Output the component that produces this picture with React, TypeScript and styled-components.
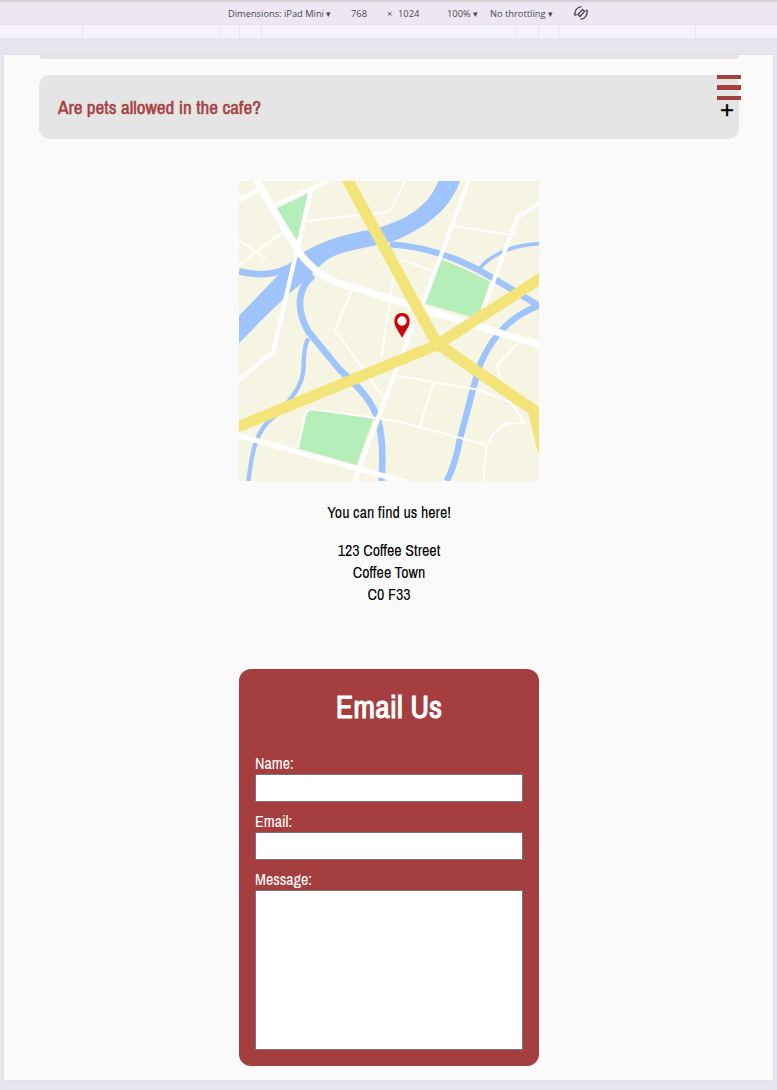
import React from "react";
import styled, { createGlobalStyle } from "styled-components";

const Global = createGlobalStyle`
  html, body { margin: 0; padding: 0; background: #e9e5f0; }
  body { width: 777px; height: 1090px; overflow: hidden; }
`;
const Page = styled.div`
  width: 777px; height: 1090px; display: flex; flex-direction: column; background: #e9e5f0;
  border-top: 2px solid #d4d2d6; box-sizing: border-box;
`;
const Toolbar = styled.div`
  height: 22px; flex: none; display: flex; align-items: center; padding-left: 228px;
  background: #ece7f2; font: 9.3px "Open Sans", "Noto Sans", sans-serif; color: #4a4a50;
`;
const ToolText = styled.span<{ $w: number }>`
  width: ${(p) => p.$w}px; flex: none; white-space: nowrap;
`;
const Ruler = styled.div`
  height: 15px; flex: none; box-sizing: border-box;
  display: grid; grid-template-columns: 83px 137px 20px 22px 255px 22px 20px 137px 1fr;
  background: #f6f2fb; border-top: 1px solid #e7def3; border-bottom: 1px solid #e7def3;
`;
const RulerCell = styled.div`
  border-right: 1px solid #e9e1f5;
  &:last-child { border-right: none; }
`;
const Viewport = styled.main`
  position: relative; flex: none; box-sizing: border-box; width: 769px; height: 1025px;
  margin: 16px 0 0 4px; background: #fafafa; overflow: hidden; outline: 1px solid #e2e0e6;
  display: flex; flex-direction: column; align-items: center;
  font-family: "Liberation Sans Narrow", "Archivo Narrow", "Liberation Sans", sans-serif; font-size: 16px; color: #000;
`;
const ClippedCard = styled.div`
  width: 700px; height: 4px; flex: none; margin-left: 1px; background: #e5e5e5; border-radius: 0 0 10px 10px;
`;
const Faq = styled.section`
  width: 700px; height: 64px; flex: none; margin: 16px 0 0 1px; box-sizing: border-box; padding: 0 19px;
  display: flex; align-items: center; background: #e5e5e5; border-radius: 10px;
`;
const Question = styled.h3`
  margin: 0; font-size: 19.2px; font-weight: 400; color: #a53f3f; -webkit-text-stroke: 0.45px #a53f3f;
`;
const Burger = styled.div`
  position: absolute; top: 20px; left: 713px; width: 24px; display: flex; flex-direction: column; gap: 6px;
`;
const BurgerBar = styled.span`
  display: block; height: 4.4px; background: #a53f3f;
`;
const Plus = styled.span`
  position: absolute; top: 43px; left: 716px; font: 400 24px/24px "Liberation Sans", sans-serif; color: #000;
  -webkit-text-stroke: 0.3px #000;
`;
const MapFrame = styled.svg`
  display: block; width: 300px; height: 300px; flex: none; margin: 42px 0 0 1px;
`;
const Find = styled.p`
  margin: 22px 0 0 1px; line-height: 18px; text-align: center;
`;
const Address = styled.address`
  margin: 18px 0 0 1px; font-style: normal; line-height: 22px; text-align: center;
`;
const Form = styled.form`
  width: 300px; height: 397px; flex: none; box-sizing: border-box; margin: 64px 0 0 1px; padding: 16px;
  background: #a53f3f; border-radius: 12px; color: #fff;
`;
const Title = styled.h2`
  margin: 4px 0 0; font-size: 32px; line-height: 36px; font-weight: 400; text-align: center;
  -webkit-text-stroke: 0.9px #fff;
`;
const Label = styled.label`
  display: block; line-height: 18px; margin-top: 10px;
  &:first-of-type { margin-top: 29px; }
`;
const Input = styled.input`
  display: block; width: 268px; height: 28px; margin: 2px 0 0; padding: 0; box-sizing: border-box;
  background: #fff; border: 1px solid #767676; border-radius: 0;
`;
const TextArea = styled.textarea`
  display: block; width: 268px; height: 160px; margin: 2px 0 0; padding: 0; box-sizing: border-box;
  background: #fff; border: 1px solid #767676; border-radius: 0; resize: none;
`;

const Road = styled.path<{ $w: number }>`
  fill: none; stroke: #fff; stroke-width: ${(p) => p.$w}; stroke-linejoin: round;
`;
const River = styled.path<{ $w: number }>`
  fill: none; stroke: #9fc4fb; stroke-width: ${(p) => p.$w}; stroke-linejoin: round;
`;
const Highway = styled.path<{ $w: number }>`
  fill: none; stroke: #f3e47a; stroke-width: ${(p) => p.$w}; stroke-linejoin: miter;
`;

export default function App() {
  return (
    <Page>
      <Global />
      <Toolbar>
        <ToolText $w={123}>Dimensions: iPad Mini ▾</ToolText>
        <ToolText $w={36}>768</ToolText>
        <ToolText $w={11}>×</ToolText>
        <ToolText $w={49}>1024</ToolText>
        <ToolText $w={43}>100% ▾</ToolText>
        <ToolText $w={83}>No throttling ▾</ToolText>
        <svg width="16" height="16" viewBox="0 0 16 16" fill="none" stroke="#4a4a50" strokeWidth="1.3">
          <path d="M5 9.5 L9.5 4.5 L11.5 6.5 L7 11.5 Z" />
          <path d="M2.2 10 C1.2 6 4 2 8.5 1.6" />
          <path d="M13.8 5.5 C15 9.5 12 14 7.5 14.4" />
          <path d="M0.8 8.5 L2.4 11 L4.2 9 M15 7 L13.6 4.6 L11.8 6.4" strokeWidth="1" />
        </svg>
      </Toolbar>
      <Ruler>
        {Array.from({ length: 9 }, (_, i) => <RulerCell key={i} />)}
      </Ruler>
      <Viewport>
        <ClippedCard />
        <Faq>
          <Question>Are pets allowed in the cafe?</Question>
        </Faq>
        <Burger><BurgerBar /><BurgerBar /><BurgerBar /></Burger>
        <Plus>+</Plus>
        <MapFrame viewBox="27 18 900 900" role="img" aria-label="Map">
          <rect x="27" y="18" width="900" height="900" fill="#f6f4e3" />
          <path fill="#9fc4fb" d="M27 422 L140 305 C170 270 200 240 250 215 C310 188 370 172 420 165 C500 145 590 110 625 18 L690 18 C660 100 600 150 500 195 C430 218 340 222 290 255 C255 285 225 320 190 345 C140 390 80 450 27 505 Z" />
          <River $w={20} d="M27 289 C80 302 130 302 175 278" />
          <River $w={19} d="M480 208 C600 215 700 255 790 310 L927 392 C860 415 790 470 750 570 C725 650 710 720 690 790 C680 850 665 890 650 918" />
          <River $w={11} d="M750 278 C790 235 850 210 927 206" />
          <River $w={20} d="M250 302 C205 335 195 400 235 470 L330 585 C390 640 430 680 445 740 C460 800 458 860 455 918" />
          <River $w={13} d="M234 490 C215 530 225 570 218 600 C205 660 150 710 115 740 C70 785 65 850 55 918" />
          <path fill="#b5eeb9" d="M140 100 L234 55 L202 197 Z" />
          <path fill="#b5eeb9" d="M630 252 C680 270 730 295 780 320 L752 405 L722 425 L582 385 Z" />
          <path fill="#b5eeb9" d="M245 705 L430 730 L380 870 L200 820 L225 725 Q230 705 245 705 Z" />
          <Road $w={6} d="M230 138 L465 112 C495 108 500 60 525 18" />
          <Road $w={6} d="M660 152 L835 178" />
          <Road $w={6} d="M27 195 L108 252 M27 270 L160 170" />
          <Road $w={6} d="M602 285 L512 253 L490 310 L455 545" />
          <Road $w={6} d="M365 345 L315 465 L455 660" />
          <Road $w={6} d="M490 600 L750 645 C790 660 810 675 840 680 L885 745" />
          <Road $w={6} d="M610 625 L570 755" />
          <Road $w={6} d="M870 498 L800 572 L810 610" />
          <Road $w={6} d="M203 820 L225 725 Q230 700 250 703 L500 738 L770 810 L760 918" />
          <Road $w={6} d="M885 745 L835 745 C810 750 790 775 773 805" />
          <Road $w={14} d="M27 75 L85 45 M135 92 L295 18" />
          <Road $w={13} d="M245 40 L190 270 L130 530 L27 615" />
          <Road $w={12} d="M715 18 L580 385" />
          <Road $w={12} d="M927 85 L862 128 L760 400" />
          <Road $w={16} d="M27 782 L530 922" />
          <Road $w={14} d="M550 450 L372 922" />
          <Road $w={21} d="M80 18 L200 222 C240 280 300 325 370 337 L927 510" />
          <Highway $w={34} d="M350 10 L620 505 L910 705 L940 830" />
          <Highway $w={33} d="M20 757 L620 510 L935 308" />
          <path fill="#c9060f" d="M516 488 L497 455 C488 438 494 414 516 414 C538 414 544 438 535 455 Z" />
          <circle cx="516" cy="438" r="14" fill="#fff" />
        </MapFrame>
        <Find>You can find us here!</Find>
        <Address>123 Coffee Street<br />Coffee Town<br />C0 F33</Address>
        <Form>
          <Title>Email Us</Title>
          <Label htmlFor="n">Name:</Label>
          <Input id="n" />
          <Label htmlFor="e">Email:</Label>
          <Input id="e" />
          <Label htmlFor="m">Message:</Label>
          <TextArea id="m" />
        </Form>
      </Viewport>
    </Page>
  );
}
